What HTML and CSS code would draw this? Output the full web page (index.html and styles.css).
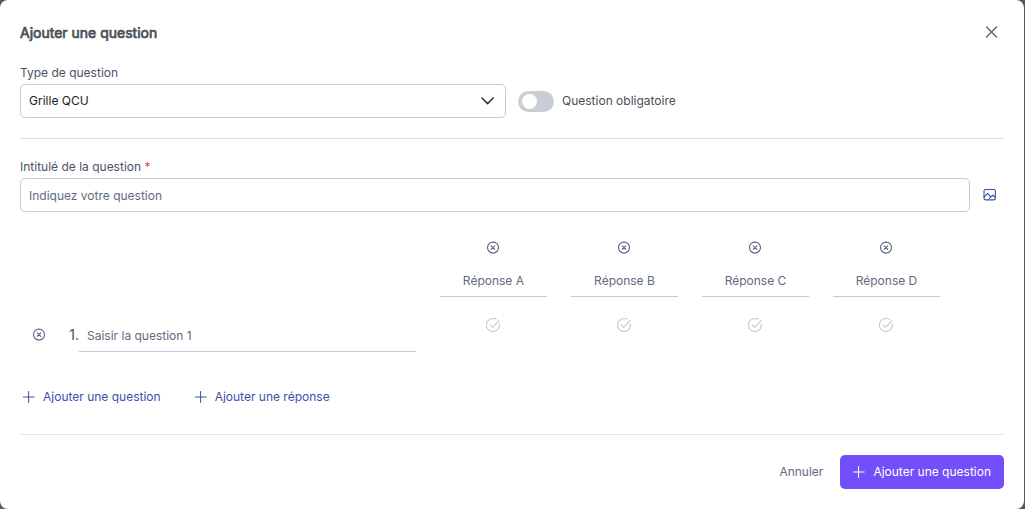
FILE: index.html
```html
<!DOCTYPE html>
<html lang="fr">
<head>
  <meta charset="UTF-8">
  <meta name="viewport" content="width=device-width, initial-scale=1.0">
  <title>Ajouter une question</title>
  <link rel="stylesheet" href="styles.css">
</head>
<body>
  <!-- Shared icons -->
  <svg class="sprite" aria-hidden="true">
    <symbol id="icon-remove" viewBox="0 0 14 14">
      <circle cx="7" cy="6.6" r="5.5"/>
      <path d="M5.2 4.8l3.6 3.6M8.8 4.8L5.2 8.4"/>
    </symbol>
    <symbol id="icon-check" viewBox="0 0 14 14">
      <path d="M13.3 5.8A6.5 6.5 0 1 1 10.2 1.4"/>
      <path d="M4 6.8l2.6 2.5L13 2.6"/>
    </symbol>
    <symbol id="icon-plus" viewBox="0 0 12 12">
      <path d="M5.6 .5v11M.2 6h11"/>
    </symbol>
  </svg>

  <form class="modal" role="dialog" aria-labelledby="modalTitle">
    <header class="modal-header">
      <h1 id="modalTitle">Ajouter une question</h1>
      <button type="button" class="icon-btn close-btn" aria-label="Fermer">
        <svg class="icon" viewBox="0 0 14 14"><path d="M1.5 2l10 10M11.5 2l-10 10"/></svg>
      </button>
    </header>

    <section class="type-section">
      <div class="field">
        <label for="questionType">Type de question</label>
        <div class="select-wrap">
          <select id="questionType">
            <option>Grille QCU</option>
          </select>
          <svg class="chevron" viewBox="0 0 14 8"><path d="M1 1l5.6 5.6L12.2 1"/></svg>
        </div>
      </div>
      <label class="switch">
        <input type="checkbox" role="switch">
        <span>Question obligatoire</span>
      </label>
    </section>

    <section class="title-section">
      <div class="field">
        <label for="questionTitle">Intitulé de la question <span class="required">*</span></label>
        <input type="text" id="questionTitle" placeholder="Indiquez votre question">
      </div>
      <button type="button" class="icon-btn image-btn" aria-label="Ajouter une image">
        <svg class="icon" viewBox="0 0 14 14">
          <rect x="1" y="1.5" width="11.4" height="10.4" rx="1.6"/>
          <path d="M1.2 9l3.4-3.6L8 8.8l2-1.6 2.2 2.4M8 8.8l-1.6 1.5"/>
        </svg>
      </button>
    </section>

    <section class="matrix">
      <div class="answer">
        <button type="button" class="icon-btn" aria-label="Supprimer la réponse A"><svg class="icon"><use href="#icon-remove"/></svg></button>
        <input type="text" class="line-input" placeholder="Réponse A" aria-label="Réponse A">
      </div>
      <div class="answer">
        <button type="button" class="icon-btn" aria-label="Supprimer la réponse B"><svg class="icon"><use href="#icon-remove"/></svg></button>
        <input type="text" class="line-input" placeholder="Réponse B" aria-label="Réponse B">
      </div>
      <div class="answer">
        <button type="button" class="icon-btn" aria-label="Supprimer la réponse C"><svg class="icon"><use href="#icon-remove"/></svg></button>
        <input type="text" class="line-input" placeholder="Réponse C" aria-label="Réponse C">
      </div>
      <div class="answer">
        <button type="button" class="icon-btn" aria-label="Supprimer la réponse D"><svg class="icon"><use href="#icon-remove"/></svg></button>
        <input type="text" class="line-input" placeholder="Réponse D" aria-label="Réponse D">
      </div>

      <div class="sub-question">
        <button type="button" class="icon-btn" aria-label="Supprimer la question 1"><svg class="icon"><use href="#icon-remove"/></svg></button>
        <label class="number" for="question1">1.</label>
        <input type="text" class="line-input" id="question1" placeholder="Saisir la question 1">
      </div>
      <label class="choice"><input type="radio" name="q1" aria-label="Réponse A"><svg class="icon"><use href="#icon-check"/></svg></label>
      <label class="choice"><input type="radio" name="q1" aria-label="Réponse B"><svg class="icon"><use href="#icon-check"/></svg></label>
      <label class="choice"><input type="radio" name="q1" aria-label="Réponse C"><svg class="icon"><use href="#icon-check"/></svg></label>
      <label class="choice"><input type="radio" name="q1" aria-label="Réponse D"><svg class="icon"><use href="#icon-check"/></svg></label>
    </section>

    <div class="add-actions">
      <button type="button" class="btn link"><svg class="plus"><use href="#icon-plus"/></svg>Ajouter une question</button>
      <button type="button" class="btn link"><svg class="plus"><use href="#icon-plus"/></svg>Ajouter une réponse</button>
    </div>

    <footer class="modal-footer">
      <button type="button" class="btn cancel">Annuler</button>
      <button type="submit" class="btn primary"><svg class="plus"><use href="#icon-plus"/></svg>Ajouter une question</button>
    </footer>
  </form>
</body>
</html>
```

FILE: styles.css
```css
* {
  box-sizing: border-box;
}

body {
  margin: 0;
  padding-right: 1px;
  background-color: #58585a;
  color: #495057;
  font-family: Inter, "Liberation Sans", sans-serif;
  font-size: 12px;
  line-height: 16px;
}

button, input, select {
  font: inherit;
  color: inherit;
  margin: 0;
}

button {
  padding: 0;
  border: none;
  background: none;
  cursor: pointer;
}

svg {
  display: block;
  fill: none;
  stroke: currentColor;
  stroke-linecap: round;
  stroke-linejoin: round;
}

.sprite {
  position: absolute;
  width: 0;
  height: 0;
}

.modal {
  padding: 20px;
  border-radius: 8px;
  background-color: white;
}

.modal-header {
  display: flex;
  justify-content: space-between;
  align-items: flex-start;
  margin-bottom: 19px;
}

h1 {
  margin: 0;
  font-size: 14px;
  font-weight: 400;
  line-height: 26px;
  -webkit-text-stroke: 0.05em currentColor;
}

.icon {
  width: 14px;
  height: 14px;
  stroke-width: 1.1;
}

.icon-btn {
  display: flex;
  align-items: center;
  justify-content: center;
  width: 24px;
  height: 24px;
  color: #5b6480;
}

.close-btn {
  color: #56606b;
}

.close-btn .icon {
  stroke-width: 1.3;
}

/* Type and required switch */
.type-section {
  display: grid;
  grid-template-columns: 1fr 1fr;
  align-items: end;
  gap: 12px;
  padding-bottom: 20px;
  border-bottom: 1px solid #d8dde4;
}

.field {
  display: flex;
  flex-direction: column;
  gap: 3px;
  flex: 1;
  color: #4b5268;
}

.required {
  color: #f03e3e;
}

.field select,
.field input {
  width: 100%;
  height: 34px;
  padding: 0 8px;
  border: 1px solid #c5c9da;
  border-radius: 5px;
  background-color: white;
}

.field select {
  appearance: none;
  color: #1a1d21;
}

::placeholder {
  color: #626a80;
  opacity: 1;
}

.select-wrap {
  position: relative;
}

.chevron {
  position: absolute;
  top: 13px;
  right: 11px;
  width: 14px;
  height: 8px;
  color: #343a40;
  stroke-width: 1.6;
  pointer-events: none;
}

.switch {
  display: flex;
  align-items: center;
  gap: 8px;
  height: 34px;
}

.switch input {
  appearance: none;
  display: flex;
  align-items: center;
  width: 36px;
  height: 21px;
  padding: 0 4px;
  border-radius: 11px;
  background-color: #c8ced3;
}

.switch input::before {
  content: "";
  width: 15px;
  height: 15px;
  border-radius: 50%;
  background-color: white;
}

.switch input:checked {
  justify-content: flex-end;
  background-color: #734ffa;
}

/* Question title */
.title-section {
  display: flex;
  align-items: flex-end;
  gap: 8px;
  margin-top: 20px;
}

.image-btn {
  height: 34px;
  margin-right: 2px;
  color: #3b50a8;
}

/* Answer grid */
.matrix {
  display: grid;
  grid-template-columns: 37fr repeat(4, 10fr);
  column-gap: 24px;
  row-gap: 21px;
  margin: 24px 64px 0 0;
}

.answer {
  display: flex;
  flex-direction: column;
  align-items: center;
  gap: 3px;
}

.answer:first-child {
  grid-column-start: 2;
}

.line-input {
  width: 100%;
  min-width: 0;
  height: 34px;
  padding: 2px 8px 0;
  border: none;
  border-bottom: 1px solid #c5c9da;
  background: none;
}

.answer .line-input {
  text-align: center;
}

.sub-question {
  display: flex;
  align-items: center;
  padding-left: 7px;
}

.sub-question .icon-btn {
  flex-shrink: 0;
}

.number {
  width: 28px;
  flex-shrink: 0;
  font-size: 14px;
  text-align: right;
}

.choice {
  display: flex;
  justify-content: center;
  position: relative;
  color: #c5cad8;
  cursor: pointer;
}

.choice input {
  position: absolute;
  opacity: 0;
}

.choice input:checked + .icon {
  color: #734ffa;
}

/* Buttons */
.btn {
  display: flex;
  align-items: center;
  gap: 8px;
  height: 34px;
  border-radius: 5px;
}

.plus {
  width: 12px;
  height: 12px;
}

.link {
  color: #3b50a8;
}

.add-actions {
  display: flex;
  gap: 34px;
  margin: 28px 0 20px;
  padding-left: 3px;
}

.modal-footer {
  display: flex;
  justify-content: flex-end;
  gap: 17px;
  padding-top: 20px;
  border-top: 1px solid #e5e7ea;
}

.cancel {
  color: #626a80;
}

.primary {
  padding: 0 13px;
  background-color: #734ffa;
  color: white;
}
```
